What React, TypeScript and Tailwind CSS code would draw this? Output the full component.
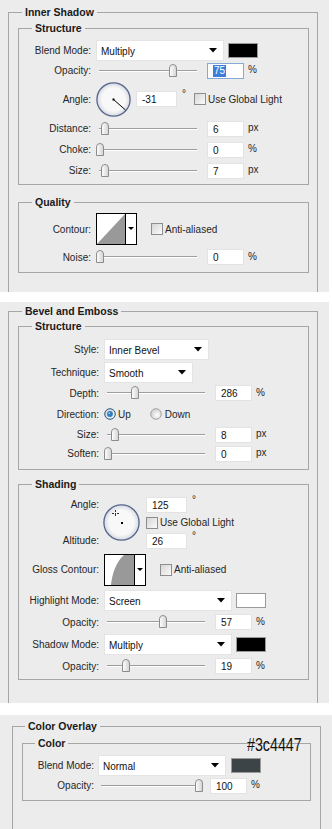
import React from "react";

const Tri = () => (
  <svg width="8" height="5" viewBox="0 0 8 5" className="shrink-0">
    <path d="M0 0H8L4 4.5Z" fill="#000" />
  </svg>
);

function Select({ w, text }: { w: string; text: string }) {
  return (
    <div className={`${w} h-[21px] bg-white border border-[#e4e4e4] flex items-center pl-[4px] pr-[6px] shrink-0`}>
      <span className="flex-1 pt-[2px] text-[#111]">{text}</span>
      <Tri />
    </div>
  );
}

function Swatch({ c }: { c: string }) {
  return <div className={`w-[30px] h-[15px] border border-[#9a9a9a] shrink-0 ${c}`} />;
}

function Num({ v, w = "w-[37px]", sel = false }: { v: string; w?: string; sel?: boolean }) {
  return (
    <div
      className={`${w} h-[16px] bg-white border ${sel ? "border-[#86a9d6]" : "border-[#e3e3e3]"} flex items-center pl-[5px] shrink-0 text-[#111]`}
    >
      {sel ? <span className="bg-[#3b7fd8] text-white leading-[12px] px-[1px]">{v}</span> : <span className="pt-[1px]">{v}</span>}
    </div>
  );
}

function Thumb() {
  return (
    <svg width="8" height="13" viewBox="0 0 8 13">
      <defs>
        <linearGradient id="tg" x1="0" y1="0" x2="1" y2="0">
          <stop offset="0" stopColor="#ffffff" />
          <stop offset="1" stopColor="#d2d2d2" />
        </linearGradient>
      </defs>
      <path d="M0.5 12.5V4Q0.5 0.5 4 0.5Q7.5 0.5 7.5 4V12.5Z" fill="url(#tg)" stroke="#8c8c8c" />
    </svg>
  );
}

function Slider({ w, left }: { w: string; left: number }) {
  return (
    <div className={`relative ${w} h-[14px] shrink-0`}>
      <div className="absolute left-[3px] right-[10px] top-[6px] h-[1px] bg-[#9d9d9d]" />
      <div className="absolute left-[3px] right-[10px] top-[7px] h-[1px] bg-white" />
      <div className="absolute top-[0px]" style={{ left }}>
        <Thumb />
      </div>
    </div>
  );
}

function Check() {
  return <div className="w-[12px] h-[12px] border border-[#8e8e8e] bg-linear-to-br from-[#d6d6d6] to-[#fbfbfb] shrink-0" />;
}

function Radio({ on }: { on: boolean }) {
  return (
    <svg width="12" height="12" viewBox="0 0 12 12" className="shrink-0">
      <defs>
        <radialGradient id="rgoff" cx="60%" cy="60%" r="60%">
          <stop offset="0" stopColor="#ffffff" />
          <stop offset="1" stopColor="#d0d0d0" />
        </radialGradient>
      </defs>
      <circle cx="6" cy="6" r="5.3" fill="url(#rgoff)" stroke={on ? "#2d5d86" : "#a2a2a2"} />
      {on && <circle cx="6" cy="6" r="2.9" fill="#2b7dbf" />}
      {on && <circle cx="5.3" cy="5.3" r="1" fill="#8cc6ee" />}
    </svg>
  );
}

function Dial1() {
  return (
    <svg width="35" height="35" viewBox="0 0 35 35" className="shrink-0">
      <defs>
        <radialGradient id="d1" cx="50%" cy="50%" r="50%">
          <stop offset="0.7" stopColor="#f8f8f8" />
          <stop offset="1" stopColor="#d6d9e2" />
        </radialGradient>
      </defs>
      <circle cx="17.5" cy="17.5" r="16.6" fill="url(#d1)" stroke="#56658c" strokeWidth="1.3" />
      <line x1="17.5" y1="17.5" x2="29.5" y2="28" stroke="#000" strokeWidth="1" />
      <rect x="16.5" y="16.5" width="2" height="2" fill="#000" />
    </svg>
  );
}

function Dial2() {
  return (
    <svg width="37" height="37" viewBox="0 0 37 37" className="shrink-0">
      <defs>
        <radialGradient id="d2" cx="50%" cy="50%" r="50%">
          <stop offset="0.7" stopColor="#f8f8f8" />
          <stop offset="1" stopColor="#d6d9e2" />
        </radialGradient>
      </defs>
      <circle cx="18.5" cy="18.5" r="17.6" fill="url(#d2)" stroke="#56658c" strokeWidth="1.3" />
      <rect x="18" y="18" width="2" height="2" fill="#000" />
      <g fill="#333">
        <rect x="12" y="6" width="1" height="2" />
        <rect x="12" y="10" width="1" height="2" />
        <rect x="9" y="9" width="2" height="1" />
        <rect x="14" y="9" width="2" height="1" />
        <rect x="12" y="9" width="1" height="1" />
      </g>
    </svg>
  );
}

function Contour1() {
  return (
    <svg width="41" height="32" viewBox="0 0 41 32" className="shrink-0">
      <rect x="0.5" y="0.5" width="40" height="31" fill="#fff" stroke="#000" />
      <path d="M1 31L29 1V31Z" fill="#999" />
      <line x1="29.5" y1="0" x2="29.5" y2="32" stroke="#000" />
      <path d="M32 14H38L35 17Z" fill="#000" />
    </svg>
  );
}

function Contour2() {
  return (
    <svg width="42" height="32" viewBox="0 0 42 32" className="shrink-0">
      <rect x="0.5" y="0.5" width="41" height="31" fill="#fff" stroke="#000" />
      <path d="M7 31C8 20 12 8 20 1L30 1V31Z" fill="#999" />
      <line x1="30.5" y1="0" x2="30.5" y2="32" stroke="#000" />
      <path d="M33 14H39L36 17Z" fill="#000" />
    </svg>
  );
}

function Legend({ text, ml }: { text: string; ml: string }) {
  return <legend className={`${ml} px-[3px] text-[10.5px] font-bold leading-[14px] text-[#1a1a1a]`}>{text}</legend>;
}

function Deg() {
  return <span className="ml-[5px] leading-[10px] -translate-y-[5px]">°</span>;
}

type SR = {
  labelW: string;
  h: string;
  label: string;
  gap: string;
  sw: string;
  left: number;
  v: string;
  unit: string;
  sel?: boolean;
};

function SliderRow({ labelW, h, label, gap, sw, left, v, unit, sel }: SR) {
  return (
    <div className={`flex items-center ${h}`}>
      <div className={`${labelW} text-right shrink-0`}>{label}</div>
      <div className={`${gap} flex items-center`}>
        <Slider w={sw} left={left} />
        <Num v={v} sel={sel} />
        <span className="ml-[4px] -translate-y-[1px]">{unit}</span>
      </div>
    </div>
  );
}

export default function App() {
  return (
    <div className="w-[332px] h-[829px] bg-white font-['Liberation_Sans',Arial,sans-serif] text-[10px] text-[#262626] overflow-hidden">
      {/* Panel 1: Inner Shadow */}
      <div className="w-[329px] h-[292px] bg-[#ececec] overflow-hidden pt-[5px]">
        <fieldset className="ml-[8px] w-[310px] border border-[#a6a6a6] pb-[40px]">
          <Legend text="Inner Shadow" ml="ml-[13px]" />
          <fieldset className="mt-[2px] ml-[9px] w-[291px] border border-[#a6a6a6] pb-[3px]">
            <Legend text="Structure" ml="ml-[13px]" />
            <div className="mt-[4px] flex items-center h-[22px]">
              <div className="w-[72px] text-right shrink-0">Blend Mode:</div>
              <div className="ml-[5px] flex items-center">
                <Select w="w-[128px]" text="Multiply" />
                <div className="ml-[4px]">
                  <Swatch c="bg-black" />
                </div>
              </div>
            </div>
            <SliderRow labelW="w-[72px]" h="h-[19px]" label="Opacity:" gap="ml-[5px]" sw="w-[111px]" left={73} v="75" unit="%" sel />
            <div className="flex items-center h-[38px]">
              <div className="w-[72px] text-right shrink-0">Angle:</div>
              <div className="ml-[5px] flex items-center">
                <Dial1 />
                <div className="ml-[5px]">
                  <Num v="-31" w="w-[41px]" />
                </div>
                <Deg />
                <div className="ml-[8px]">
                  <Check />
                </div>
                <span className="ml-[2px]">Use Global Light</span>
              </div>
            </div>
            <SliderRow labelW="w-[72px]" h="h-[21px]" label="Distance:" gap="ml-[5px]" sw="w-[111px]" left={5} v="6" unit="px" />
            <SliderRow labelW="w-[72px]" h="h-[21px]" label="Choke:" gap="ml-[5px]" sw="w-[111px]" left={0} v="0" unit="%" />
            <SliderRow labelW="w-[72px]" h="h-[21px]" label="Size:" gap="ml-[5px]" sw="w-[111px]" left={5} v="7" unit="px" />
          </fieldset>
          <fieldset className="mt-[10px] ml-[9px] w-[291px] border border-[#a6a6a6] pb-[5px]">
            <Legend text="Quality" ml="ml-[13px]" />
            <div className="mt-[4px] flex items-center h-[32px]">
              <div className="w-[72px] text-right shrink-0">Contour:</div>
              <div className="ml-[5px] flex items-center">
                <Contour1 />
                <div className="ml-[14px]">
                  <Check />
                </div>
                <span className="ml-[2px]">Anti-aliased</span>
              </div>
            </div>
            <div className="mt-[2px]">
              <SliderRow labelW="w-[72px]" h="h-[20px]" label="Noise:" gap="ml-[5px]" sw="w-[111px]" left={0} v="0" unit="%" />
            </div>
          </fieldset>
        </fieldset>
      </div>

      {/* Panel 2: Bevel and Emboss */}
      <div className="mt-[10px] w-[329px] h-[401px] bg-[#ececec] overflow-hidden pt-[2px]">
        <fieldset className="ml-[8px] w-[310px] border border-[#a6a6a6] pb-[40px]">
          <Legend text="Bevel and Emboss" ml="ml-[13px]" />
          <fieldset className="mt-[1px] ml-[9px] w-[291px] border border-[#a6a6a6] pb-[6px]">
            <Legend text="Structure" ml="ml-[13px]" />
            <div className="mt-[5px] flex items-center h-[22px]">
              <div className="w-[80px] text-right shrink-0">Style:</div>
              <div className="ml-[5px]">
                <Select w="w-[105px]" text="Inner Bevel" />
              </div>
            </div>
            <div className="mt-[1px] flex items-center h-[22px]">
              <div className="w-[80px] text-right shrink-0">Technique:</div>
              <div className="ml-[5px]">
                <Select w="w-[89px]" text="Smooth" />
              </div>
            </div>
            <SliderRow labelW="w-[80px]" h="h-[20px]" label="Depth:" gap="ml-[5px]" sw="w-[111px]" left={27} v="286" unit="%" />
            <div className="flex items-center h-[22px]">
              <div className="w-[80px] text-right shrink-0">Direction:</div>
              <div className="ml-[5px] flex items-center">
                <Radio on />
                <span className="ml-[2px]">Up</span>
                <div className="ml-[19px]">
                  <Radio on={false} />
                </div>
                <span className="ml-[3px]">Down</span>
              </div>
            </div>
            <SliderRow labelW="w-[80px]" h="h-[19px]" label="Size:" gap="ml-[5px]" sw="w-[111px]" left={7} v="8" unit="px" />
            <SliderRow labelW="w-[80px]" h="h-[19px]" label="Soften:" gap="ml-[5px]" sw="w-[111px]" left={0} v="0" unit="px" />
          </fieldset>
          <fieldset className="mt-[7px] ml-[9px] w-[291px] border border-[#a6a6a6] pb-[3px]">
            <Legend text="Shading" ml="ml-[13px]" />
            <div className="mt-[5px] flex">
              <div className="w-[80px] flex flex-col shrink-0">
                <div className="h-[17px] flex items-center justify-end">Angle:</div>
                <div className="h-[19px]" />
                <div className="h-[17px] flex items-center justify-end">Altitude:</div>
              </div>
              <div className="ml-[4px] flex items-center">
                <Dial2 />
              </div>
              <div className="ml-[6px] flex flex-col">
                <div className="h-[17px] flex items-center">
                  <Num v="125" w="w-[41px]" />
                  <Deg />
                </div>
                <div className="h-[19px] flex items-center">
                  <Check />
                  <span className="ml-[2px]">Use Global Light</span>
                </div>
                <div className="h-[17px] flex items-center">
                  <Num v="26" w="w-[41px]" />
                  <Deg />
                </div>
              </div>
            </div>
            <div className="mt-[4px] flex items-center h-[33px]">
              <div className="w-[80px] text-right shrink-0">Gloss Contour:</div>
              <div className="ml-[5px] flex items-center">
                <Contour2 />
                <div className="ml-[14px]">
                  <Check />
                </div>
                <span className="ml-[2px]">Anti-aliased</span>
              </div>
            </div>
            <div className="mt-[3px] flex items-center h-[23px]">
              <div className="w-[80px] text-right shrink-0">Highlight Mode:</div>
              <div className="ml-[5px] flex items-center">
                <Select w="w-[128px]" text="Screen" />
                <div className="ml-[4px]">
                  <Swatch c="bg-white" />
                </div>
              </div>
            </div>
            <SliderRow labelW="w-[80px]" h="h-[20px]" label="Opacity:" gap="ml-[5px]" sw="w-[111px]" left={55} v="57" unit="%" />
            <div className="mt-[1px] flex items-center h-[23px]">
              <div className="w-[80px] text-right shrink-0">Shadow Mode:</div>
              <div className="ml-[5px] flex items-center">
                <Select w="w-[128px]" text="Multiply" />
                <div className="ml-[4px]">
                  <Swatch c="bg-black" />
                </div>
              </div>
            </div>
            <SliderRow labelW="w-[80px]" h="h-[20px]" label="Opacity:" gap="ml-[5px]" sw="w-[111px]" left={18} v="19" unit="%" />
          </fieldset>
        </fieldset>
      </div>

      {/* Panel 3: Color Overlay */}
      <div className="relative mt-[12px] w-[332px] h-[114px] bg-[#ececec] overflow-hidden pt-[4px]">
        <fieldset className="ml-[12px] w-[309px] border border-[#a6a6a6] pb-[40px]">
          <Legend text="Color Overlay" ml="ml-[12px]" />
          <fieldset className="mt-[3px] ml-[9px] w-[289px] border border-[#a6a6a6] pb-[6px]">
            <Legend text="Color" ml="ml-[12px]" />
            <div className="mt-[4px] flex items-center h-[23px]">
              <div className="w-[71px] text-right shrink-0">Blend Mode:</div>
              <div className="ml-[4px] flex items-center">
                <Select w="w-[128px]" text="Normal" />
                <div className="ml-[5px]">
                  <Swatch c="bg-[#3c4447]" />
                </div>
              </div>
            </div>
            <SliderRow labelW="w-[71px]" h="h-[17px]" label="Opacity:" gap="ml-[4px]" sw="w-[112px]" left={97} v="100" unit="%" />
          </fieldset>
        </fieldset>
        <div className="absolute left-[247px] top-[20px] text-[19px] leading-none text-[#111] scale-x-75 origin-left whitespace-nowrap">
          #3c4447
        </div>
      </div>
    </div>
  );
}
